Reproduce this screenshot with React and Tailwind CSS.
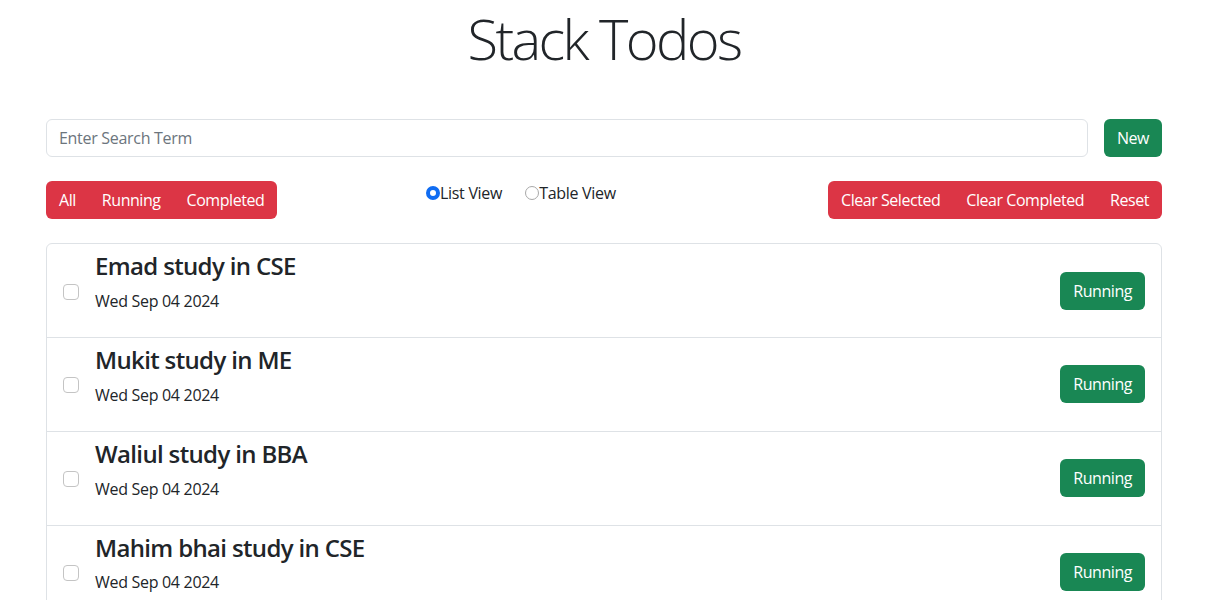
import React from "react";

const todos = [
  "Emad study in CSE",
  "Mukit study in ME",
  "Waliul study in BBA",
  "Mahim bhai study in CSE",
  "Rakib study in EEE",
];

const btn = "border border-transparent px-3 py-1.5 text-base leading-6 tracking-[-0.45px]";

export default function App() {
  return (
    <div className="min-h-screen bg-white text-[#212529] tracking-[-0.3px] font-['Open_Sans','Noto_Sans',sans-serif]">
      <div className="w-[1116px] ml-[46px]">
        <h1 className="pt-[5px] mb-[47px] text-center text-[56px] font-light leading-[1.2] tracking-[-2.6px]">
          Stack Todos
        </h1>

        <div className="flex gap-4">
          <input
            type="text"
            placeholder="Enter Search Term"
            className="flex-1 h-[38px] rounded-md border border-[#dee2e6] px-3 text-base tracking-[-0.3px] text-[#212529] placeholder:text-[#6c757d] outline-none"
          />
          <button className={"rounded-md bg-[#198754] text-white " + btn}>New</button>
        </div>

        <div className="mt-6 grid grid-cols-3 gap-6">
          <div>
            <div className="inline-flex rounded-md bg-[#dc3545] text-white">
              <button className={btn}>All</button>
              <button className={btn}>Running</button>
              <button className={btn}>Completed</button>
            </div>
          </div>
          <div className="flex items-start text-base leading-6">
            <label className="flex items-center">
              <span className="box-border h-[14px] w-[14px] rounded-full border-[4px] border-[#0f6cf2] bg-white" />
              <span>List View</span>
            </label>
            <label className="ml-[23px] flex items-center">
              <span className="box-border h-[14px] w-[14px] rounded-full border border-[#a8a8a8] bg-white" />
              <span>Table View</span>
            </label>
          </div>
          <div className="flex justify-end">
            <div className="inline-flex rounded-md bg-[#dc3545] text-white">
              <button className={btn}>Clear Selected</button>
              <button className={btn}>Clear Completed</button>
              <button className={btn}>Reset</button>
            </div>
          </div>
        </div>

        <ul className="mt-6 rounded-md border border-[#dee2e6]">
          {todos.map((t, i) => (
            <li
              key={t}
              className={
                "flex items-center px-4 py-2 " +
                (i < todos.length - 1 ? "border-b border-[#dee2e6]" : "")
              }
            >
              <span className="mr-4 mt-[2px] box-border h-4 w-4 shrink-0 rounded-[4px] border border-[#c4c4c4] bg-white" />
              <div className="flex-1">
                <h4 className="mb-2 text-2xl font-semibold leading-[1.2] tracking-[-0.65px]">{t}</h4>
                <p className="mb-4 text-base leading-6">Wed Sep 04 2024</p>
              </div>
              <button className={"rounded-md bg-[#198754] text-white " + btn}>Running</button>
            </li>
          ))}
        </ul>
      </div>
    </div>
  );
}
